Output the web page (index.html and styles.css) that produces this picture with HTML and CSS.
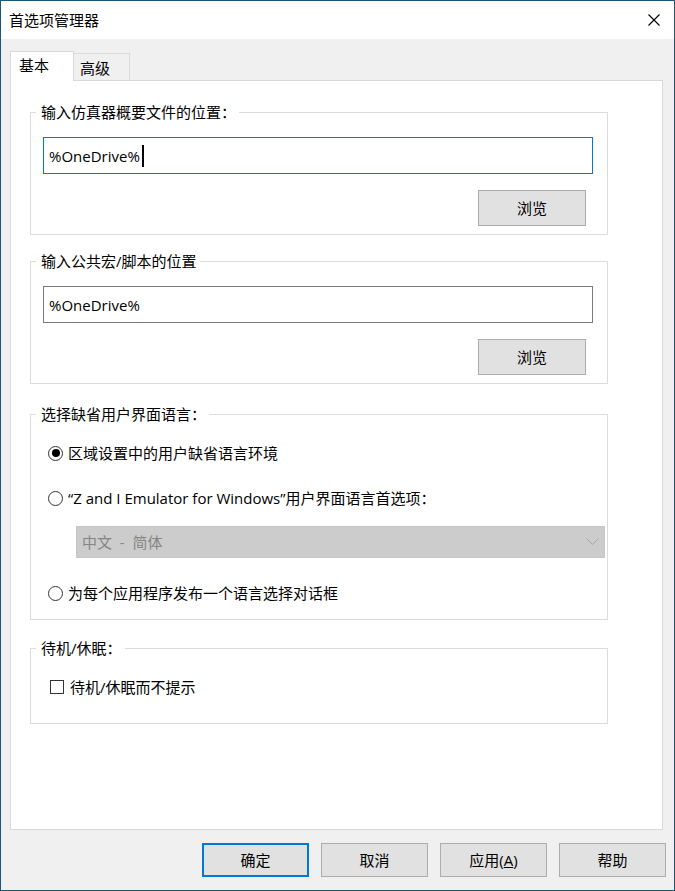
FILE: index.html
```html
<!DOCTYPE html>
<html lang="zh-CN">
<head>
<meta charset="utf-8">
<title>首选项管理器</title>
<link rel="stylesheet" href="styles.css">
</head>
<body>
<div class="window">
  <div class="titlebar">
    <span class="title">首选项管理器</span>
    <span class="close"><svg width="12" height="12" viewBox="0 0 12 12"><path d="M0.5 0.5 L11.5 11.5 M11.5 0.5 L0.5 11.5" stroke="#000" stroke-width="1.1" fill="none"/></svg></span>
  </div>
  <div class="client">
    <div class="tabs">
      <div class="tab active">基本</div>
      <div class="tab inactive">高级</div>
    </div>
    <div class="panel">
      <fieldset class="group g-path">
        <legend>输入仿真器概要文件的位置：</legend>
        <div class="textbox focused"><span class="val">%OneDrive%</span><span class="caret"></span></div>
        <div class="row-right"><button class="btn browse">浏览</button></div>
      </fieldset>
      <fieldset class="group g-path g2">
        <legend>输入公共宏/脚本的位置</legend>
        <div class="textbox"><span class="val">%OneDrive%</span></div>
        <div class="row-right"><button class="btn browse">浏览</button></div>
      </fieldset>
      <fieldset class="group g-lang">
        <legend>选择缺省用户界面语言：</legend>
        <div class="opt first"><span class="radio checked"><span class="dot"></span></span><span>区域设置中的用户缺省语言环境</span></div>
        <div class="opt second"><span class="radio"></span><span>“Z and I Emulator for Windows”用户界面语言首选项：</span></div>
        <div class="combo"><span>中文&nbsp; -&nbsp; 简体</span><svg width="13" height="8" viewBox="0 0 13 8"><polyline points="0.5,0.5 6.5,6.5 12.5,0.5" stroke="#a8a8a8" stroke-width="1" fill="none"/></svg></div>
        <div class="opt third"><span class="radio"></span><span>为每个应用程序发布一个语言选择对话框</span></div>
      </fieldset>
      <fieldset class="group g-sleep">
        <legend>待机/休眠：</legend>
        <div class="chk-row"><span class="checkbox"></span><span>待机/休眠而不提示</span></div>
      </fieldset>
    </div>
    <div class="buttons">
      <button class="btn dlg default">确定</button>
      <button class="btn dlg">取消</button>
      <button class="btn dlg">应用(<u>A</u>)</button>
      <button class="btn dlg">帮助</button>
    </div>
  </div>
</div>
</body>
</html>
```

FILE: styles.css
```css
* { box-sizing: border-box; }
html, body { margin: 0; padding: 0; }
body {
  width: 675px;
  height: 891px;
  overflow: hidden;
  font-family: "Open Sans", "Noto Sans CJK SC", sans-serif;
  font-size: 15px;
  color: #000;
  background: #fff;
}
.window {
  width: 675px;
  height: 891px;
  border: 1px solid #1b5679;
  display: flex;
  flex-direction: column;
}
.titlebar {
  flex: none;
  height: 38px;
  background: #fff;
  display: flex;
  align-items: center;
  justify-content: space-between;
  padding: 0 14px 0 8px;
}
.title { line-height: 20px; }
.close { display: flex; width: 12px; height: 12px; }

.client {
  flex: 1;
  background: #f0f0f0;
  display: flex;
  flex-direction: column;
  padding: 12px 11px 13px 9px;
}
.tabs {
  flex: none;
  height: 29px;
  display: flex;
  align-items: flex-end;
  position: relative;
  z-index: 1;
}
.tab {
  border: 1px solid #d9d9d9;
  border-bottom: none;
  background: #f0f0f0;
  line-height: 20px;
}
.tab.active {
  width: 64px;
  height: 30px;
  margin-bottom: -1px;
  background: #fff;
  padding: 3px 0 0 8px;
}
.tab.inactive {
  width: 57px;
  height: 27px;
  margin-left: -1px;
  padding: 4px 0 0 6px;
}
.panel {
  flex: 1;
  background: #fff;
  border: 1px solid #d9d9d9;
  padding: 21px 0 0 19px;
}
.group {
  width: 578px;
  margin: 0;
  padding: 0;
  min-inline-size: 0;
  border: 1px solid #dcdcdc;
}
.group legend {
  margin-left: 5px;
  padding: 0 3px 0 5px;
  line-height: 20px;
  font-size: 15px;
}
.g2 { margin-top: 16px; }
.g-lang { margin-top: 20px; padding-bottom: 15px; }
.g-sleep { margin-top: 18px; padding-bottom: 25px; }

.g-path { padding-bottom: 8px; }
.textbox {
  margin: 15px 14px 0 12px;
  height: 37px;
  border: 1px solid #7a7a7a;
  background: #fff;
  display: flex;
  align-items: center;
  padding-left: 5px;
  line-height: 20px;
}
.textbox.focused { border-color: #0078d7; }
.caret {
  display: inline-block;
  width: 2px;
  height: 22px;
  background: #000;
  margin-left: 2px;
}
.row-right {
  display: flex;
  justify-content: flex-end;
  margin: 16px 21px 0 0;
}
.btn {
  font: inherit;
  color: #000;
  background: #e1e1e1;
  border: 1px solid #adadad;
  padding: 0;
  line-height: 20px;
}
.browse { width: 108px; height: 36px; }

.opt {
  display: flex;
  align-items: center;
  height: 22px;
  padding-left: 17px;
  gap: 5px;
  line-height: 20px;
}
.opt.first { margin-top: 18px; }
.opt.second { margin-top: 23px; }
.opt.third { margin-top: 24px; }
.radio {
  width: 15px;
  height: 15px;
  border: 1px solid #333;
  border-radius: 50%;
  display: flex;
  align-items: center;
  justify-content: center;
  flex: none;
  background: #fff;
}
.radio .dot {
  width: 8px;
  height: 8px;
  border-radius: 50%;
  background: #000;
}
.combo {
  margin: 17px 2px 0 45px;
  height: 32px;
  background: #cccccc;
  border: 1px solid #c6c6c6;
  display: flex;
  align-items: center;
  justify-content: space-between;
  padding: 0 5px 0 5px;
  color: #858585;
  line-height: 20px;
}
.chk-row {
  display: flex;
  align-items: center;
  height: 22px;
  margin-top: 18px;
  padding-left: 19px;
  gap: 6px;
  line-height: 20px;
}
.checkbox {
  width: 14px;
  height: 14px;
  border: 1px solid #333;
  background: #fff;
  flex: none;
}

.buttons {
  flex: none;
  display: flex;
  justify-content: flex-end;
  gap: 12px;
  margin-top: 13px;
  margin-right: -3px;
}
.dlg { width: 107px; height: 34px; }
.dlg.default { border: 2px solid #0078d7; }
```
